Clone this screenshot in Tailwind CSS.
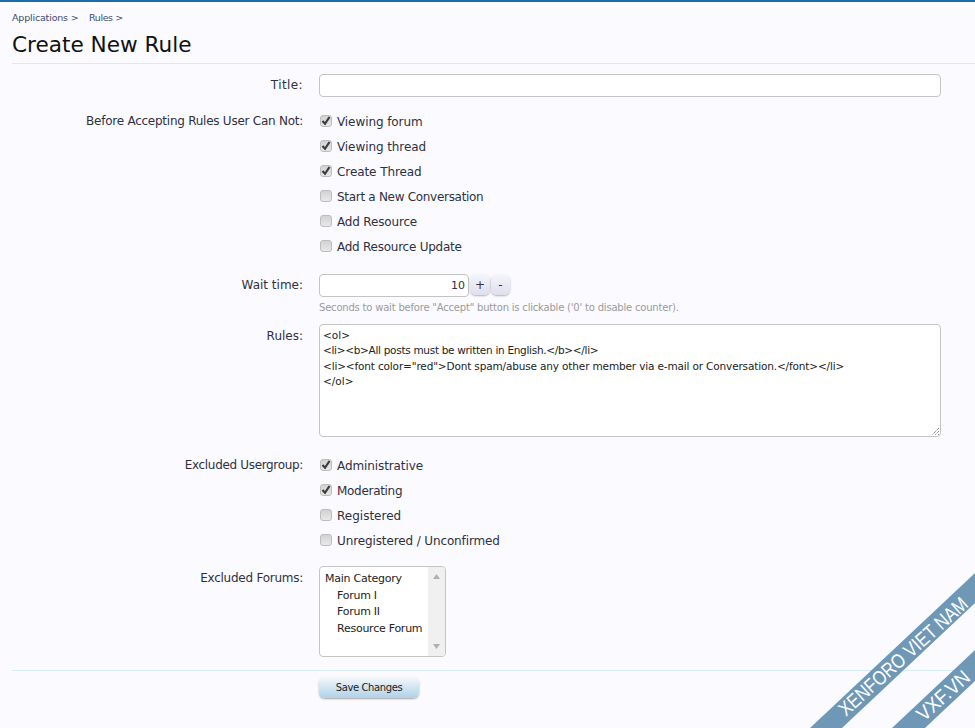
<!DOCTYPE html>
<html><head><meta charset="utf-8"><script src="https://cdn.jsdelivr.net/npm/@tailwindcss/browser@4"></script></head>
<body class="m-0 bg-[#fbfbff]">
<div class="relative w-[975px] h-[728px] overflow-hidden border-t-2 border-[#1d6cae] font-['DejaVu_Sans',sans-serif] text-[12px] text-[#2f2f3f]">
  <div class="pl-[12px]">
    <nav class="flex h-[30px] pt-[9px] text-[9.5px] leading-[14px] text-[#3d4a70]"><span class="w-[77px] tracking-[-0.18px]">Applications &gt;</span><span class="tracking-[-0.4px]">Rules &gt;</span></nav>
    <h1 class="h-[31px] text-[21.6px] leading-[26px] font-normal text-[#111]">Create New Rule</h1>
    <div class="h-px bg-[#dce9f5]"></div>
    <form class="flex flex-col">
      <div class="grid grid-cols-[291px_622px] gap-x-[16px] mt-[10px]">
        <label class="text-right leading-[23px] tracking-[0.4px]">Title:</label>
        <div class="h-[23px] rounded-[4px] border border-[#c4c4c4] bg-white"></div>
      </div>
      <div class="grid grid-cols-[291px_622px] gap-x-[16px] mt-[12px]">
        <label class="text-right leading-[25px] tracking-[-0.25px]">Before Accepting Rules User Can Not:</label>
        <div class="flex flex-col">
          <div class="flex items-center gap-[5px] h-[25px] tracking-[-0.08px]"><span class="flex justify-center items-center w-[12px] h-[12px] mb-[2px] ml-px rounded-[3px] border border-[#bdbdbd] bg-gradient-to-b from-[#d2d2d2] to-[#e8e8e8]"><svg width="10" height="10" viewBox="0 0 10 10"><path d="M1.5 5l2.5 2.8L8.5 1" fill="none" stroke="#3d3d3d" stroke-width="2.2"/></svg></span>Viewing forum</div>
          <div class="flex items-center gap-[5px] h-[25px] tracking-[-0.08px]"><span class="flex justify-center items-center w-[12px] h-[12px] mb-[2px] ml-px rounded-[3px] border border-[#bdbdbd] bg-gradient-to-b from-[#d2d2d2] to-[#e8e8e8]"><svg width="10" height="10" viewBox="0 0 10 10"><path d="M1.5 5l2.5 2.8L8.5 1" fill="none" stroke="#3d3d3d" stroke-width="2.2"/></svg></span>Viewing thread</div>
          <div class="flex items-center gap-[5px] h-[25px] tracking-[-0.08px]"><span class="flex justify-center items-center w-[12px] h-[12px] mb-[2px] ml-px rounded-[3px] border border-[#bdbdbd] bg-gradient-to-b from-[#d2d2d2] to-[#e8e8e8]"><svg width="10" height="10" viewBox="0 0 10 10"><path d="M1.5 5l2.5 2.8L8.5 1" fill="none" stroke="#3d3d3d" stroke-width="2.2"/></svg></span>Create Thread</div>
          <div class="flex items-center gap-[5px] h-[25px] tracking-[-0.3px]"><span class="w-[12px] h-[12px] mb-[2px] ml-px rounded-[3px] border border-[#bdbdbd] bg-gradient-to-b from-[#d2d2d2] to-[#e8e8e8]"></span>Start a New Conversation</div>
          <div class="flex items-center gap-[5px] h-[25px] tracking-[-0.17px]"><span class="w-[12px] h-[12px] mb-[2px] ml-px rounded-[3px] border border-[#bdbdbd] bg-gradient-to-b from-[#d2d2d2] to-[#e8e8e8]"></span>Add Resource</div>
          <div class="flex items-center gap-[5px] h-[25px] tracking-[-0.25px]"><span class="w-[12px] h-[12px] mb-[2px] ml-px rounded-[3px] border border-[#bdbdbd] bg-gradient-to-b from-[#d2d2d2] to-[#e8e8e8]"></span>Add Resource Update</div>
        </div>
      </div>
      <div class="grid grid-cols-[291px_622px] gap-x-[16px] mt-[15px]">
        <label class="text-right leading-[23px]">Wait time:</label>
        <div>
          <div class="flex items-start gap-[1px]">
            <div class="w-[150px] h-[23px] pr-[3px] rounded-[4px] border border-[#c4c4c4] bg-white text-right text-[11px] leading-[21px]">10</div>
            <span class="flex justify-center items-center w-[20px] h-[21px] rounded-[6px] bg-gradient-to-b from-[#f5f5fc] to-[#dfdfee] shadow-[0_1px_2px_rgba(0,0,0,.3)]">+</span>
            <span class="flex justify-center items-center w-[19px] h-[21px] rounded-[6px] bg-gradient-to-b from-[#f5f5fc] to-[#dfdfee] shadow-[0_1px_2px_rgba(0,0,0,.3)]">-</span>
          </div>
          <p class="mt-[4px] h-[13px] text-[10px] leading-[14px] tracking-[-0.2px] text-[#9a9a9a]">Seconds to wait before "Accept" button is clickable ('0' to disable counter).</p>
        </div>
      </div>
      <div class="grid grid-cols-[291px_622px] gap-x-[16px] mt-[10px]">
        <label class="text-right leading-[25px]">Rules:</label>
        <div class="relative h-[113px] rounded-[4px] border border-[#c4c4c4] bg-white pl-[3px] pt-[3px] text-[10.5px] leading-[15.33px] text-[#222]">
          <div>&lt;ol&gt;</div>
          <div class="tracking-[-0.3px]">&lt;li&gt;&lt;b&gt;All posts must be written in English.&lt;/b&gt;&lt;/li&gt;</div>
          <div class="tracking-[-0.15px]">&lt;li&gt;&lt;font color="red"&gt;Dont spam/abuse any other member via e-mail or Conversation.&lt;/font&gt;&lt;/li&gt;</div>
          <div>&lt;/ol&gt;</div>
          <svg class="absolute right-0 bottom-0" width="10" height="10" viewBox="0 0 10 10"><path d="M9 2L2 9M9 5L5 9M9 8L8 9" stroke="#555" stroke-width="1" stroke-dasharray="1 1"/></svg>
        </div>
      </div>
      <div class="grid grid-cols-[291px_622px] gap-x-[16px] mt-[16px]">
        <label class="text-right leading-[25px] tracking-[-0.33px]">Excluded Usergroup:</label>
        <div class="flex flex-col">
          <div class="flex items-center gap-[5px] h-[25px] tracking-[-0.1px]"><span class="flex justify-center items-center w-[12px] h-[12px] mb-[2px] ml-px rounded-[3px] border border-[#bdbdbd] bg-gradient-to-b from-[#d2d2d2] to-[#e8e8e8]"><svg width="10" height="10" viewBox="0 0 10 10"><path d="M1.5 5l2.5 2.8L8.5 1" fill="none" stroke="#3d3d3d" stroke-width="2.2"/></svg></span>Administrative</div>
          <div class="flex items-center gap-[5px] h-[25px] tracking-[-0.3px]"><span class="flex justify-center items-center w-[12px] h-[12px] mb-[2px] ml-px rounded-[3px] border border-[#bdbdbd] bg-gradient-to-b from-[#d2d2d2] to-[#e8e8e8]"><svg width="10" height="10" viewBox="0 0 10 10"><path d="M1.5 5l2.5 2.8L8.5 1" fill="none" stroke="#3d3d3d" stroke-width="2.2"/></svg></span>Moderating</div>
          <div class="flex items-center gap-[5px] h-[25px]"><span class="w-[12px] h-[12px] mb-[2px] ml-px rounded-[3px] border border-[#bdbdbd] bg-gradient-to-b from-[#d2d2d2] to-[#e8e8e8]"></span>Registered</div>
          <div class="flex items-center gap-[5px] h-[25px] tracking-[-0.12px]"><span class="w-[12px] h-[12px] mb-[2px] ml-px rounded-[3px] border border-[#bdbdbd] bg-gradient-to-b from-[#d2d2d2] to-[#e8e8e8]"></span>Unregistered / Unconfirmed</div>
        </div>
      </div>
      <div class="grid grid-cols-[291px_622px] gap-x-[16px] mt-[13px]">
        <label class="text-right leading-[25px] tracking-[-0.25px]">Excluded Forums:</label>
        <div class="flex w-[127px] h-[91px] rounded-[4px] border border-[#c4c4c4] bg-white overflow-hidden">
          <div class="flex-1 pl-[5px] pt-[4px] text-[11px] leading-[16.5px] tracking-[-0.25px] text-[#222]">
            <div>Main Category</div><div class="pl-[12px]">Forum I</div><div class="pl-[12px]">Forum II</div><div class="pl-[12px]">Resource Forum</div>
          </div>
          <div class="flex flex-col justify-between items-center w-[17px] py-[7px] bg-[#f0f0f0]">
            <svg width="7" height="5"><path d="M3.5 0L7 5H0z" fill="#b0b0b0"/></svg>
            <svg width="7" height="5"><path d="M0 0H7L3.5 5z" fill="#b0b0b0"/></svg>
          </div>
        </div>
      </div>
      <div class="h-px bg-[#d7ecf7] mt-[13px]"></div>
      <div class="mt-[6px] ml-[307px]">
        <button type="button" class="block w-[100px] h-[21px] rounded-[6px] bg-gradient-to-b from-[#f5f8fb] to-[#b0d1e8] shadow-[0_1px_2px_rgba(0,0,0,.35)] text-[10px] tracking-[-0.4px] text-[#222]">Save Changes</button>
      </div>
    </form>
  </div>
  <svg class="absolute left-0 top-[-2px]" width="975" height="728" viewBox="0 0 975 728">
    <path d="M975 573L810 728H842L975 603z" fill="#6f98b7"/>
    <path d="M975 650L892 728H925L975 681z" fill="#6f98b7"/>
    <text transform="translate(846 717) rotate(-42)" font-family="Liberation Sans" font-size="20" fill="#fff" textLength="166" lengthAdjust="spacingAndGlyphs">XENFORO VIET NAM</text>
    <text transform="translate(924 722) rotate(-42)" font-family="Liberation Sans" font-size="20" fill="#fff" textLength="64" lengthAdjust="spacingAndGlyphs">VXF.VN</text>
  </svg>
</div>
</body></html>
